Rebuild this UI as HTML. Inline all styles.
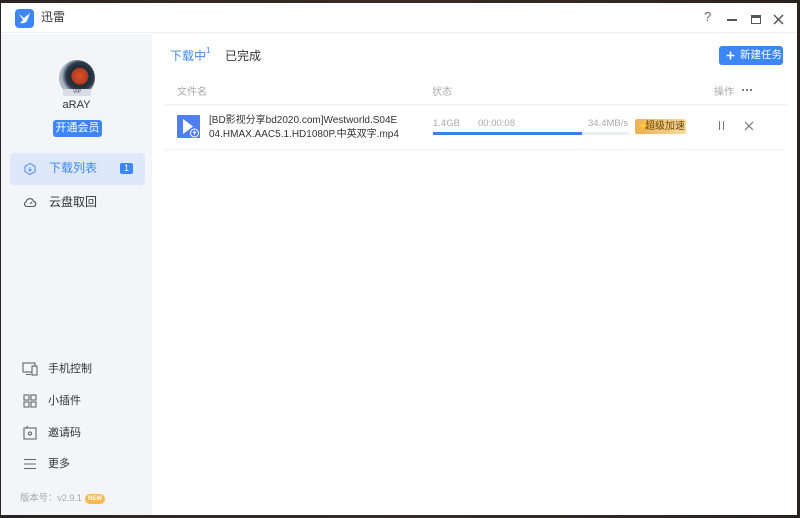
<!DOCTYPE html>
<html><head><meta charset="utf-8"><style>
*{margin:0;padding:0;box-sizing:border-box}
body{width:800px;height:518px;overflow:hidden;background:linear-gradient(90deg,#2b2424,#3a2c25 50%,#2a2220);font-family:"Liberation Sans","Noto Sans CJK SC",sans-serif;position:relative}
.win{position:absolute;left:1px;top:3px;width:796px;height:512px;background:#fff;overflow:hidden}
.title{position:absolute;left:0;top:0;width:796px;height:30px;background:#fff;border-bottom:1px solid #eef0f3}
.side{position:absolute;left:0;top:31px;width:151px;height:481px;background:#f3f5f8}
.a{position:absolute;white-space:nowrap}
.t12{font-size:12px;color:#333}
</style></head><body>
<div class="win">
<div class="title">
 <div class="a" style="left:14px;top:6px;width:19px;height:19px;background:#3d86f5;border-radius:4px">
  <svg width="19" height="19" viewBox="0 0 19 19"><path d="M4 5 L9 9 L15 4 L12 12 Q9 15 5 14 L8 11 Z" fill="#fff"/></svg>
 </div>
 <div class="a" style="left:40px;top:5px;font-size:12px;color:#333">迅雷</div>
 <div class="a" style="left:703px;top:6px;font-size:13px;color:#666">?</div>
 <div class="a" style="left:726px;top:16px;width:10px;height:1.5px;background:#555"></div>
 <div class="a" style="left:750px;top:12px;width:10px;height:9px;border:1.5px solid #555;border-top-width:3px"></div>
 <svg class="a" style="left:772px;top:11px" width="11" height="11"><path d="M1 1L10 10M10 1L1 10" stroke="#555" stroke-width="1.5"/></svg>
</div>
<div class="side">
 <div class="a" style="left:58px;top:26px;width:36px;height:36px;border-radius:50%;background:radial-gradient(circle at 58% 45%,#d8532a 0,#b33a1e 8px,#1d2a36 9px,#2b3b4b 14px,#aab6c2 18px)"></div>
 <div class="a" style="left:62px;top:55px;width:28px;height:7px;background:#d8dde3;border-radius:2px;font-size:5px;color:#444;text-align:center;line-height:7px">VIP</div>
 <div class="a" style="left:0;width:151px;top:65px;text-align:center;font-size:11px;color:#333">aRAY</div>
 <div class="a" style="left:52px;top:86px;width:49px;height:17px;background:#3d86f5;border-radius:3px;color:#fff;font-size:11px;text-align:center;line-height:17px">开通会员</div>
 <div class="a" style="left:9px;top:119px;width:135px;height:32px;background:#dde8fb;border-radius:4px"></div>
 <svg class="a" style="left:22px;top:128px" width="14" height="14"><path d="M7 1.5L12 4.3V9.7L7 12.5L2 9.7V4.3Z" fill="none" stroke="#5a8ff0" stroke-width="1.1"/><path d="M7 5V9M5.3 7.5L7 9L8.7 7.5" fill="none" stroke="#5a8ff0" stroke-width="1"/></svg>
 <div class="a" style="left:48px;top:125px;font-size:12px;color:#3d86f5">下载列表</div>
 <div class="a" style="left:119px;top:129px;width:13px;height:11px;background:#3d86f5;border-radius:2px;color:#fff;font-size:9px;text-align:center;line-height:11px">1</div>
 <svg class="a" style="left:22px;top:162px" width="14" height="12"><path d="M4 10.5H10.5A2.7 2.7 0 0 0 10.5 5.2A3.8 3.8 0 0 0 3.2 5.8A2.4 2.4 0 0 0 4 10.5Z" fill="none" stroke="#555" stroke-width="1.1"/><path d="M7 8L9 6" stroke="#555"/></svg>
 <div class="a t12" style="left:48px;top:159px">云盘取回</div>
 <svg class="a" style="left:21px;top:328px" width="17" height="14"><rect x="1" y="1" width="12" height="9" fill="none" stroke="#666" stroke-width="1.1"/><path d="M4 12.5H9" stroke="#666"/><rect x="10" y="4" width="5" height="9" fill="#f3f5f8" stroke="#666" stroke-width="1.1"/></svg>
 <div class="a" style="left:47px;top:326px;font-size:11px;color:#333">手机控制</div>
 <svg class="a" style="left:22px;top:360px" width="14" height="14" fill="none" stroke="#666" stroke-width="1.1"><rect x="1" y="1" width="5" height="5"/><rect x="8" y="1" width="5" height="5"/><rect x="1" y="8" width="5" height="5"/><rect x="8" y="8" width="5" height="5"/></svg>
 <div class="a" style="left:47px;top:358px;font-size:11px;color:#333">小插件</div>
 <svg class="a" style="left:22px;top:391px" width="14" height="15" fill="none" stroke="#666" stroke-width="1.1"><rect x="1" y="3" width="12" height="11"/><path d="M3 3L5 1"/><circle cx="7" cy="8.5" r="1.6"/></svg>
 <div class="a" style="left:47px;top:390px;font-size:11px;color:#333">邀请码</div>
 <svg class="a" style="left:22px;top:424px" width="14" height="12" stroke="#666" stroke-width="1.1"><path d="M1 1.5H13M1 6H13M1 10.5H13"/></svg>
 <div class="a" style="left:47px;top:421px;font-size:11px;color:#333">更多</div>
 <div class="a" style="left:19px;top:456px;font-size:9.5px;color:#aaa;letter-spacing:-0.2px">版本号：v2.9.1</div>
 <div class="a" style="left:84px;top:460px;width:20px;height:10px;background:#f8b84a;border-radius:5px;color:#fff;font-size:6px;font-weight:bold;text-align:center;line-height:10px">NEW</div>
</div>
<!-- main -->
<div class="a" style="left:169px;top:44px;font-size:12px;color:#3d86f5">下载中</div>
<div class="a" style="left:205px;top:44px;font-size:8px;line-height:8px;color:#3d86f5">1</div>
<div class="a t12" style="left:224px;top:44px">已完成</div>
<div class="a" style="left:718px;top:43px;width:64px;height:19px;background:#3d86f5;border-radius:3px;color:#fff;font-size:10.5px;line-height:19px;padding-left:21px;overflow:hidden">新建任务</div>
<svg class="a" style="left:725px;top:48px" width="9" height="9"><path d="M4.5 0.5V8.5M0.5 4.5H8.5" stroke="#fff" stroke-width="1.6"/></svg>
<div class="a" style="left:176px;top:80px;font-size:10px;color:#aaa">文件名</div>
<div class="a" style="left:431px;top:80px;font-size:10px;color:#aaa">状态</div>
<div class="a" style="left:713px;top:80px;font-size:10px;color:#aaa">操作</div>
<div class="a" style="left:741px;top:86px;width:2px;height:2px;background:#555;border-radius:1px;box-shadow:4px 0 #555,8px 0 #555"></div>
<div class="a" style="left:164px;top:101px;width:622px;height:1px;background:#eef0f3"></div>
<div class="a" style="left:164px;top:146px;width:620px;height:1px;background:#eef0f3"></div>
<div class="a" style="left:176px;top:112px;width:23px;height:23px;background:#4f7ff2;border-radius:1px">
 <svg width="23" height="23"><path d="M6 4L16 11.5L6 19Z" fill="#fff"/><circle cx="17.5" cy="18" r="4" fill="#4f7ff2" stroke="#fff" stroke-width="1"/><path d="M17.5 20V16.5M16 17.8L17.5 16.3L19 17.8" stroke="#fff" fill="none" stroke-width="0.9"/></svg>
</div>
<div class="a" style="left:208px;top:111px;font-size:10px;color:#333;line-height:14px">[BD影视分享bd2020.com]Westworld.S04E<br>04.HMAX.AAC5.1.HD1080P.中英双字.mp4</div>
<div class="a" style="left:432px;top:115px;font-size:9.5px;color:#aaa">1.4GB</div>
<div class="a" style="left:477px;top:115px;font-size:9.5px;color:#aaa">00:00:08</div>
<div class="a" style="left:587px;top:115px;font-size:9.5px;color:#aaa">34.4MB/s</div>
<div class="a" style="left:432px;top:129px;width:196px;height:3px;background:#eceef1"></div>
<div class="a" style="left:432px;top:129px;width:149px;height:3px;background:#3d7ee8"></div>
<div class="a" style="left:634px;top:116px;width:51px;height:15px;background:linear-gradient(90deg,#eab055,#f8dc9a);border-radius:2px;font-size:10px;color:#6a4410;line-height:15px;padding-left:10px">超级加速</div>
<div class="a" style="left:637px;top:117px;font-size:9px;line-height:12px;color:#fff">⚡</div>
<div class="a" style="left:718px;top:118px;width:1.2px;height:9px;background:#777"></div>
<div class="a" style="left:722px;top:118px;width:1.2px;height:9px;background:#777"></div>
<svg class="a" style="left:743px;top:118px" width="10" height="10"><path d="M1 1L9 9M9 1L1 9" stroke="#777" stroke-width="1.2"/></svg>
</div>
</body></html>
